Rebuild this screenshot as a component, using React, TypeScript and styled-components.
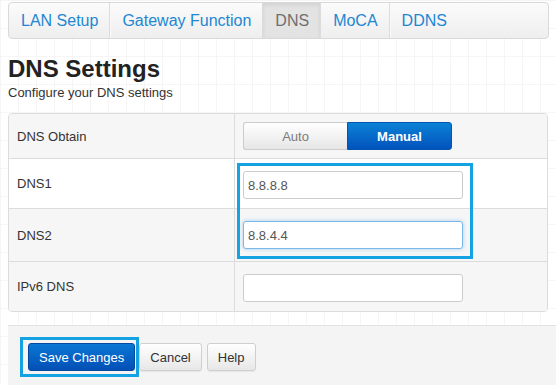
import React from "react";
import styled, { createGlobalStyle, css } from "styled-components";

const GlobalStyle = createGlobalStyle`
  html, body { margin: 0; padding: 0; }
  body {
    font-family: "Liberation Sans", Arial, sans-serif;
    background-color: #ffffff;
    background-image:
      linear-gradient(#f5f5f5 1px, transparent 1px),
      linear-gradient(90deg, #f5f5f5 1px, transparent 1px);
    background-size: 18px 28px;
    width: 556px;
    height: 385px;
    overflow: hidden;
  }
`;

const Page = styled.div`
  padding-left: 8px;
  padding-top: 2px;
  box-sizing: border-box;
  width: 556px;
  height: 385px;
`;

const TabBar = styled.nav`
  display: flex;
  width: 541px;
  height: 37px;
  box-sizing: border-box;
  border: 1px solid #d9d9d9;
  border-radius: 4px;
  background: linear-gradient(#fbfbfb, #eeeeee);
  overflow: hidden;
`;

const Tab = styled.div<{ $active?: boolean }>`
  display: flex;
  align-items: center;
  padding: 0 11px 0 12px;
  font-size: 16px;
  color: #1d87d2;
  border-right: 1px solid #dcdcdc;
  box-shadow: 1px 0 0 #fafafa;
  ${(p) =>
    p.$active &&
    css`
      color: #6f6f6f;
      background: #e3e3e3;
      box-shadow: inset 0 2px 4px rgba(0, 0, 0, 0.08);
    `}
  &:last-child { border-right: none; box-shadow: none; }
`;

const Title = styled.h1`
  margin: 16px 0 0;
  font-size: 24px;
  line-height: 28px;
  font-weight: bold;
  color: #222;
`;

const Subtitle = styled.p`
  margin: 1px 0 0;
  font-size: 13px;
  line-height: 18px;
  color: #333;
`;

const TableWrap = styled.div`
  position: relative;
  margin-top: 11px;
  width: 540px;
`;

const Table = styled.div`
  border: 1px solid #dcdcdc;
  border-radius: 4px;
  overflow: hidden;
  background: #fff;
`;

const Row = styled.div<{ $h: number; $alt?: boolean }>`
  display: grid;
  grid-template-columns: 226px 1fr;
  height: ${(p) => p.$h}px;
  box-sizing: border-box;
  background: ${(p) => (p.$alt ? "#f6f6f6" : "#ffffff")};
  & + & { border-top: 1px solid #dcdcdc; }
`;

const Label = styled.div`
  display: flex;
  align-items: center;
  padding-left: 8px;
  font-size: 13px;
  color: #333;
  border-right: 1px solid #dcdcdc;
`;

const Control = styled.div<{ $top?: number }>`
  display: flex;
  align-items: ${(p) => (p.$top === undefined ? "center" : "flex-start")};
  padding-left: 8px;
  padding-top: ${(p) => p.$top ?? 0}px;
`;

const Toggle = styled.div`
  display: flex;
  height: 28px;
`;

const ToggleBtn = styled.button<{ $on?: boolean }>`
  width: ${(p) => (p.$on ? 105 : 104)}px;
  height: 28px;
  font-family: inherit;
  font-size: 13px;
  padding: 0;
  cursor: pointer;
  ${(p) =>
    p.$on
      ? css`
          color: #fff;
          font-weight: bold;
          background: linear-gradient(#0a82d6, #0352bd);
          border: 1px solid #0455b0;
          border-radius: 0 3px 3px 0;
        `
      : css`
          color: #7a7a7a;
          background: linear-gradient(#ffffff, #e6e6e6);
          border: 1px solid #cccccc;
          border-right: none;
          border-radius: 3px 0 0 3px;
        `}
`;

const Input = styled.input<{ $focus?: boolean }>`
  width: 220px;
  height: 28px;
  box-sizing: border-box;
  border: 1px solid #cccccc;
  border-radius: 3px;
  padding: 0 4px;
  font-family: inherit;
  font-size: 13px;
  color: #555;
  background: #fff;
  outline: none;
  ${(p) =>
    p.$focus &&
    css`
      border-color: #7ab8ea;
      box-shadow: 0 0 4px rgba(102, 175, 233, 0.55);
    `}
`;

const Highlight = styled.div<{ $l: number; $t: number; $w: number; $h: number }>`
  position: absolute;
  left: ${(p) => p.$l}px;
  top: ${(p) => p.$t}px;
  width: ${(p) => p.$w}px;
  height: ${(p) => p.$h}px;
  box-sizing: border-box;
  border: 3px solid #14a2e2;
  pointer-events: none;
`;

const Footer = styled.footer`
  position: relative;
  margin-top: 13px;
  height: 70px;
  box-sizing: border-box;
  border-top: 1px solid #e2e2e2;
  background: #f4f4f4;
  padding: 17px 0 0 20px;
  display: flex;
  align-items: flex-start;
  gap: 4px;
`;

const Button = styled.button<{ $primary?: boolean }>`
  height: 28px;
  padding: 0 10px;
  font-family: inherit;
  font-size: 13px;
  border-radius: 3px;
  cursor: pointer;
  ${(p) =>
    p.$primary
      ? css`
          color: #fff;
          background: linear-gradient(#0a78d4, #034fb6);
          border: 1px solid #04489e;
        `
      : css`
          color: #333;
          background: linear-gradient(#ffffff, #e7e7e7);
          border: 1px solid #cfcfcf;
          box-shadow: 0 1px 1px rgba(0, 0, 0, 0.06);
        `}
`;

const HelpButton = styled(Button)`
  margin-left: 1px;
`;

export default function App() {
  const tabs = ["LAN Setup", "Gateway Function", "DNS", "MoCA", "DDNS"];
  return (
    <>
      <GlobalStyle />
      <Page>
        <TabBar>
          {tabs.map((t) => (
            <Tab key={t} $active={t === "DNS"}>
              {t}
            </Tab>
          ))}
        </TabBar>
        <Title>DNS Settings</Title>
        <Subtitle>Configure your DNS settings</Subtitle>
        <TableWrap>
          <Table>
            <Row $h={44} $alt>
              <Label>DNS Obtain</Label>
              <Control>
                <Toggle>
                  <ToggleBtn>Auto</ToggleBtn>
                  <ToggleBtn $on>Manual</ToggleBtn>
                </Toggle>
              </Control>
            </Row>
            <Row $h={50}>
              <Label>DNS1</Label>
              <Control $top={12}>
                <Input defaultValue="8.8.8.8" />
              </Control>
            </Row>
            <Row $h={53} $alt>
              <Label>DNS2</Label>
              <Control $top={12}>
                <Input defaultValue="8.8.4.4" $focus />
              </Control>
            </Row>
            <Row $h={50} $alt>
              <Label>IPv6 DNS</Label>
              <Control $top={12}>
                <Input defaultValue="" />
              </Control>
            </Row>
          </Table>
          <Highlight $l={229} $t={50} $w={236} $h={96} />
        </TableWrap>
        <Footer>
          <Button $primary>Save Changes</Button>
          <Button>Cancel</Button>
          <HelpButton>Help</HelpButton>
          <Highlight $l={12} $t={11} $w={119} $h={40} />
        </Footer>
      </Page>
    </>
  );
}
